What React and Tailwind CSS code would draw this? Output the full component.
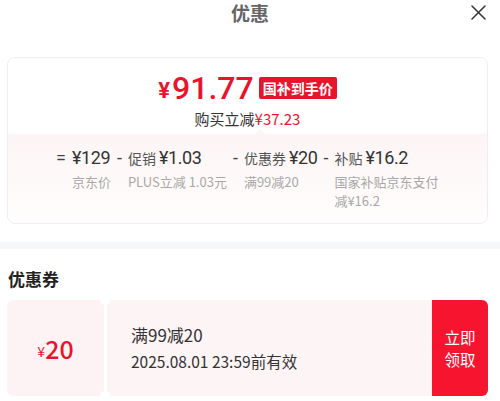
import React from "react";

const F = { fontFamily: '"Noto Sans CJK SC", "Noto Sans", sans-serif' };
const R = { fontFamily: 'Roboto, "Noto Sans CJK SC", sans-serif' };

function Item({ op, pre, value, label, wide }) {
  return (
    <div className="flex items-start">
      <div className="h-[24px] flex items-center text-[18px] text-[#444] mr-[6px] leading-none" style={R}>{op}</div>
      <div className={"flex flex-col " + (wide ? "w-[106px]" : "")}>
        <div className="h-[24px] flex items-center whitespace-nowrap">
          {pre && <span className="text-[14px] text-[#555] mr-[3px] leading-none">{pre}</span>}
          <span className="text-[18px] text-[#333] leading-none tracking-[-0.4px]" style={R}>{value}</span>
        </div>
        <div className="text-[13px] leading-[19px] text-[#a8a8a8] mt-[2px]">{label}</div>
      </div>
    </div>
  );
}

export default function App() {
  return (
    <div className="w-[500px] h-[401px] bg-white overflow-hidden" style={F}>
      <div className="relative h-[24px] flex items-center justify-center">
        <span className="text-[19px] font-bold text-[#666] leading-none">优惠</span>
        <svg className="absolute right-[14px] top-[5px]" width="15" height="15" viewBox="0 0 15 15" fill="none" stroke="#333" strokeWidth="1.5" strokeLinecap="round">
          <path d="M1 1L14 14M14 1L1 14" />
        </svg>
      </div>

      <div className="ml-[7px] mt-[33px] w-[481px] border border-[#eeeeee] rounded-[8px] overflow-hidden">
        <div className="relative bg-white pt-[12px] pb-[6px] flex flex-col items-center">
          <div className="h-[36px] flex items-center">
            <span className="text-[#e8142c] text-[22px] font-bold leading-none mt-[5px]" style={R}>¥</span>
            <span className="text-[#e8142c] text-[32px] font-medium leading-none ml-[2px]" style={R}>91.77</span>
            <span className="ml-[5px] bg-[#e8142c] text-white text-[14px] font-bold leading-[22px] px-[4px] rounded-[2px]">国补到手价</span>
          </div>
          <div className="h-[20px] mt-[2px] flex items-center text-[15px] leading-none">
            <span className="text-[#333]">购买立减</span>
            <span className="text-[#e8142c]">¥37.23</span>
          </div>
          <div className="absolute bottom-0 left-[247px] w-0 h-0 border-l-[5px] border-r-[5px] border-b-[5px] border-l-transparent border-r-transparent border-b-[#fdf5f5]" />
        </div>
        <div className="bg-gradient-to-b from-[#fdf5f5] to-[#fffdfd] pt-[12px] pb-[13px] pl-[48px] flex items-start gap-[6px]">
          <Item op="=" value="¥129" label="京东价" />
          <Item op="-" pre="促销" value="¥1.03" label="PLUS立减 1.03元" />
          <Item op="-" pre="优惠券" value="¥20" label="满99减20" />
          <Item op="-" pre="补贴" value="¥16.2" label="国家补贴京东支付减¥16.2" wide />
        </div>
      </div>

      <div className="mt-[18px] h-[7px] bg-[#f6f7fb]" />

      <div className="mt-[17px] pl-[8px] h-[24px] flex items-center text-[17px] font-bold text-[#222] leading-none">优惠券</div>

      <div className="relative mt-[10px] ml-[7px] w-[481px] h-[96px] flex">
        <div className="w-[97px] bg-[#fdf3f4] rounded-l-[6px] flex items-center justify-center">
          <span className="text-[#e8142c] text-[14px] leading-none mt-[6px]">¥</span>
          <span className="text-[#e8142c] text-[25px] font-medium leading-none">20</span>
        </div>
        <div className="w-[3px]" />
        <div className="flex-1 bg-[#fdf4f5] pl-[24px] flex flex-col justify-center">
          <div className="text-[17px] leading-[27px] text-[#333]">满99减20</div>
          <div className="text-[15.5px] leading-[27px] text-[#333]">2025.08.01 23:59前有效</div>
        </div>
        <div className="w-[56px] bg-[#f7142f] rounded-r-[6px] flex items-center justify-center">
          <span className="text-white text-[15.5px] leading-[22.5px] text-center">立即<br />领取</span>
        </div>
        <div className="absolute left-[93px] top-[-5px] w-[10px] h-[10px] rounded-full bg-white" />
        <div className="absolute left-[93px] bottom-[-5px] w-[10px] h-[10px] rounded-full bg-white" />
      </div>
    </div>
  );
}
